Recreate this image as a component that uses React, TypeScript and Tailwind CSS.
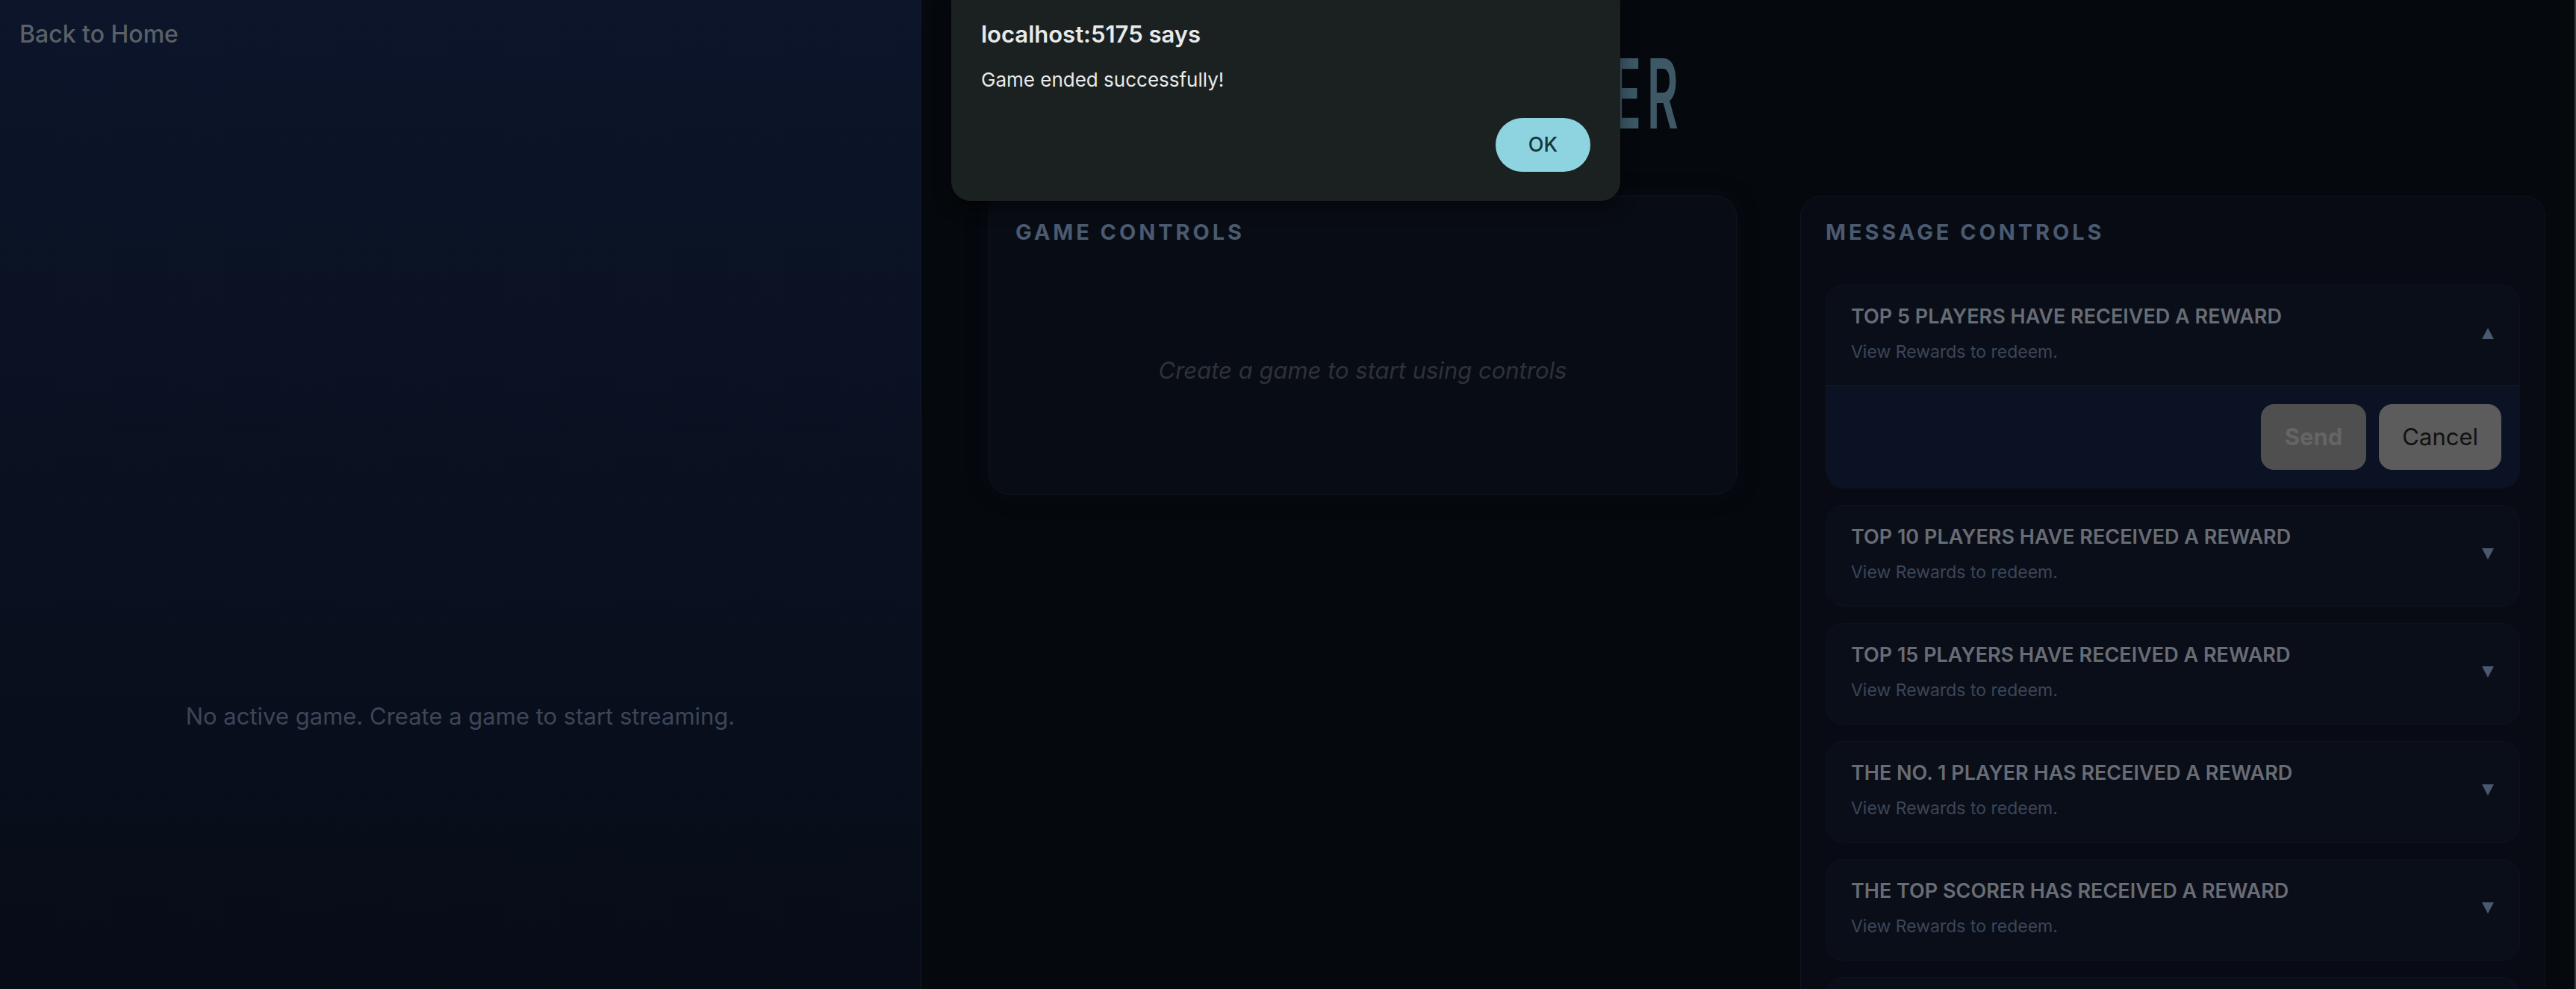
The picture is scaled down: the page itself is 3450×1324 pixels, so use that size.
const REWARDS = [
  "TOP 5 PLAYERS HAVE RECEIVED A REWARD",
  "TOP 10 PLAYERS HAVE RECEIVED A REWARD",
  "TOP 15 PLAYERS HAVE RECEIVED A REWARD",
  "THE NO. 1 PLAYER HAS RECEIVED A REWARD",
  "THE TOP SCORER HAS RECEIVED A REWARD",
  "ALL PLAYERS HAVE RECEIVED A REWARD"
];

function Caret({ up }: { up: boolean }) {
  return (
    <svg viewBox="0 0 16 15" className="h-[15px] w-[16px] shrink-0" aria-hidden="true">
      <polygon points={up ? "8,0 16,15 0,15" : "0,0 16,0 8,15"} fill="#4a5870" />
    </svg>
  );
}

function RewardItem({ title, open }: { title: string; open: boolean }) {
  return (
    <div className="overflow-hidden rounded-[24px] border border-[#0e1320] bg-[#0a0e19]">
      <div className="flex items-center justify-between pl-[33px] pr-[34px] pt-[24px] pb-[29px]">
        <div>
          <div className="text-[27px] font-semibold leading-[36px] text-[#686c74]">{title}</div>
          <div className="mt-[13px] text-[23px] leading-[32px] text-[#3b4658]">View Rewards to redeem.</div>
        </div>
        <Caret up={open} />
      </div>
      {open ? (
        <div className="flex justify-end gap-[17px] border-t border-[#141b29] bg-[#0b1223] p-[24px]">
          <button
            type="button"
            disabled
            className="h-[88px] rounded-[18px] bg-[#4f4f4f] px-[32px] text-[31px] font-bold text-[#656565]"
          >
            Send
          </button>
          <button
            type="button"
            className="h-[88px] rounded-[18px] bg-[#5c5c5c] px-[31px] text-[31px] text-[#111111]"
          >
            Cancel
          </button>
        </div>
      ) : null}
    </div>
  );
}

export default function App() {
  return (
    <div className="relative flex h-[1324px] w-[3450px] overflow-hidden bg-[#05080d] font-['Inter','Liberation_Sans',sans-serif]">
      {/* stream preview */}
      <div className="flex w-[1234px] shrink-0 flex-col border-r border-[#111a2c] bg-gradient-to-b from-[#0c152a] to-[#070c17]">
        <div className="px-[26px] pt-[27px] text-[32px] font-medium leading-[38px] text-[#5b6068]">Back to Home</div>
        <div className="pt-[874px] text-center text-[31px] leading-[40px] text-[#3d4657]">
          No active game. Create a game to start streaming.
        </div>
      </div>

      {/* controls */}
      <div className="flex flex-1 flex-col pl-[90px] pr-[39px]">
        <div className="h-[262px] shrink-0 pt-[50px]">
          <div className="flex w-[932px] justify-end">
            <div className="shrink-0 origin-right scale-x-50 whitespace-nowrap text-[129px] font-semibold leading-[150px] tracking-[0.12em] text-[#3e5866]">
              GAME MASTER
            </div>
          </div>
        </div>

        <div className="grid grid-cols-[1002px_998px] gap-[85px]">
          <div className="flex h-[400px] flex-col rounded-[28px] border border-[#0f1520] bg-[#080c14] shadow-[0_0_30px_rgba(20,28,44,0.25)]">
            <div className="px-[35px] pt-[28px] text-[29px] font-bold leading-[40px] tracking-[0.135em] text-[#4a5a70]">
              GAME CONTROLS
            </div>
            <div className="flex flex-1 items-center justify-center text-[31px] italic text-[#2e3238]">
              Create a game to start using controls
            </div>
          </div>

          <div className="rounded-[28px] border border-[#0f1520] bg-[#080b13] px-[33px] pt-[28px]">
            <div className="text-[29px] font-bold leading-[40px] tracking-[0.135em] text-[#4a5a70]">MESSAGE CONTROLS</div>
            <div className="mt-[50px] flex flex-col gap-[22px]">
              {REWARDS.map((r, i) => (
                <RewardItem key={r} title={r} open={i === 0} />
              ))}
            </div>
          </div>
        </div>
      </div>
      <div className="w-[2px] shrink-0 bg-[#3c3c3c]" />

      {/* browser alert */}
      <div className="absolute left-[1274px] top-0 flex h-[269px] w-[896px] flex-col rounded-b-[26px] bg-[#1b2020] px-[40px] shadow-[0_8px_24px_rgba(0,0,0,0.45)]">
        <div className="pt-[26px] text-[31px] font-semibold leading-[40px] text-[#e8eaea]">localhost:5175 says</div>
        <div className="mt-[24px] text-[26px] leading-[34px] text-[#e8eaea]">Game ended successfully!</div>
        <div className="mt-auto flex justify-end pb-[39px]">
          <button
            type="button"
            className="h-[72px] w-[127px] rounded-full bg-[#8dd4e0] text-[27px] font-medium text-[#17353b]"
          >
            OK
          </button>
        </div>
      </div>
    </div>
  );
}
